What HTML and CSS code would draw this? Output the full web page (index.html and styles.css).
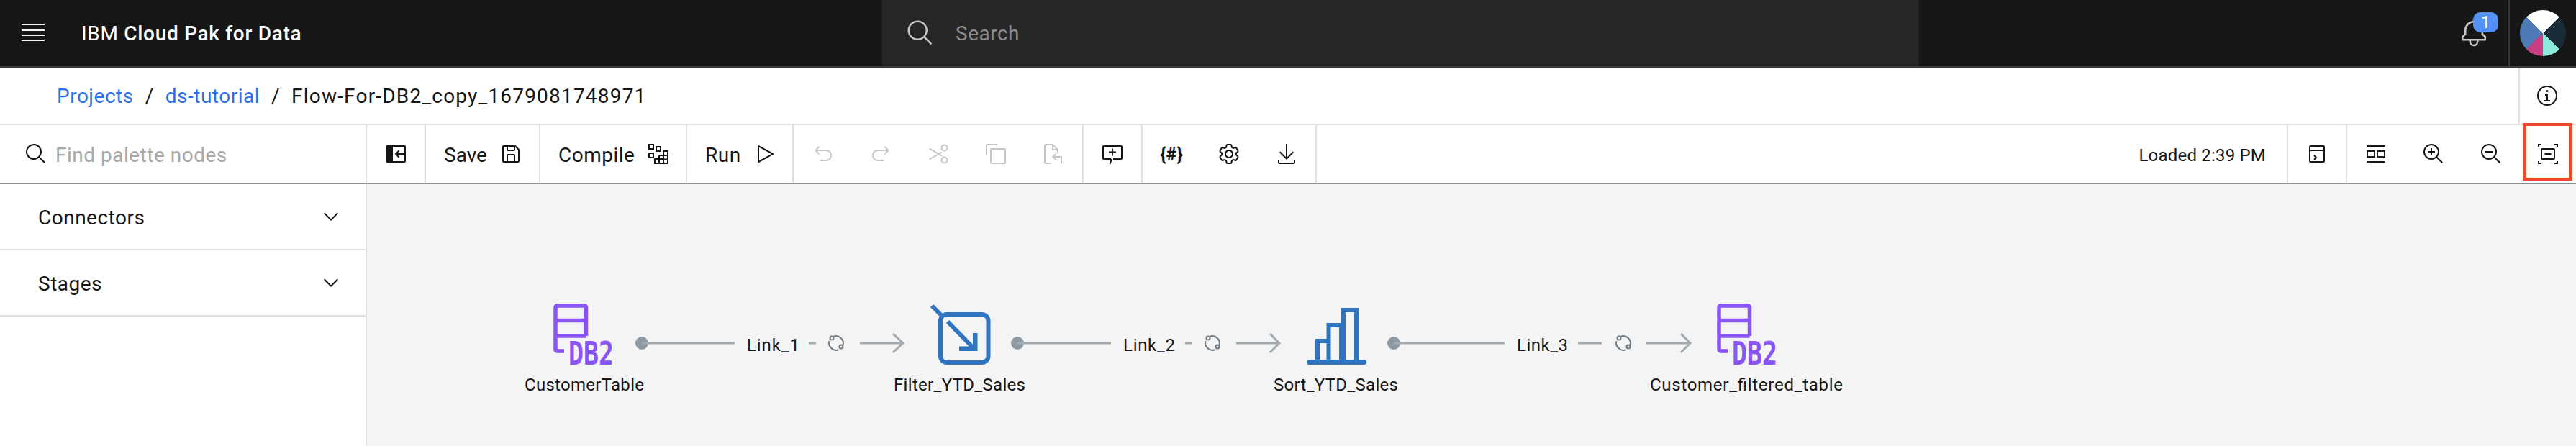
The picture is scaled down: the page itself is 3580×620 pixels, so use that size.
FILE: index.html
```html
<!DOCTYPE html>
<html lang="en">
<head>
    <meta charset="UTF-8">
    <meta name="viewport" content="width=device-width, initial-scale=1.0">
    <title>Flow-For-DB2_copy_1679081748971</title>
    <link rel="stylesheet" href="styles.css">
</head>
<body>
    <header class="topbar">
        <div class="brand">
            <svg class="menu-icon" width="32" height="24" viewBox="0 0 32 24"><path d="M0 0h32v2H0zM0 8h32v2H0zM0 15h32v2H0zM0 22h32v2H0z"/></svg>
            <span class="brand-name">IBM <b>Cloud Pak for Data</b></span>
        </div>
        <div class="global-search">
            <svg width="40" height="40" viewBox="0 0 32 32"><path d="M29,27.5859l-7.5521-7.5521a11.0177,11.0177,0,1,0-1.4141,1.4141L27.5859,29ZM4,13a9,9,0,1,1,9,9A9.01,9.01,0,0,1,4,13Z"/></svg>
            <span>Search</span>
        </div>
        <div class="topbar-right">
            <div class="bell">
                <svg width="42" height="42" viewBox="0 0 32 32"><path d="M28.7071,19.293,26,16.5859V13a10.0136,10.0136,0,0,0-9-9.9492V1H15V3.0508A10.0136,10.0136,0,0,0,6,13v3.5859L3.2929,19.293A1,1,0,0,0,3,20v3a1,1,0,0,0,1,1h7v.7768a5.152,5.152,0,0,0,4.5,5.1987A5.0057,5.0057,0,0,0,21,25V24h7a1,1,0,0,0,1-1V20A1,1,0,0,0,28.7071,19.293ZM19,25a3,3,0,0,1-6,0V24h6Zm8-3H5V20.4141L7.707,17.707A1,1,0,0,0,8,17V13a8,8,0,0,1,16,0v4a1,1,0,0,0,.293.707L27,20.4141Z"/></svg>
                <span class="badge">1</span>
            </div>
            <div class="avatar-cell"><div class="avatar"></div></div>
        </div>
    </header>

    <div class="crumbs-row">
        <nav class="crumbs">
            <a href="#">Projects</a>
            <span>/</span>
            <a href="#">ds-tutorial</a>
            <span>/</span>
            <span class="crumb-current">Flow-For-DB2_copy_1679081748971</span>
        </nav>
        <div class="info-cell">
            <svg width="32" height="32" viewBox="0 0 32 32"><path d="M17 22v-8h-4v2h2v6h-3v2h8v-2h-3zM16 8a1.5 1.5 0 101.5 1.5A1.5 1.5 0 0016 8z"/><path d="M16 30a14 14 0 1114-14A14 14 0 0116 30zm0-26a12 12 0 1012 12A12 12 0 0016 4z"/></svg>
        </div>
    </div>

    <div class="toolbar">
        <div class="palette-search">
            <svg width="32" height="32" viewBox="0 0 32 32"><path d="M29,27.5859l-7.5521-7.5521a11.0177,11.0177,0,1,0-1.4141,1.4141L27.5859,29ZM4,13a9,9,0,1,1,9,9A9.01,9.01,0,0,1,4,13Z"/></svg>
            <span>Find palette nodes</span>
        </div>
        <div class="tool-cell first">
            <div class="tool">
                <svg width="32" height="32" viewBox="0 0 32 32"><path d="M4 4h24a2 2 0 012 2v20a2 2 0 01-2 2H4a2 2 0 01-2-2V6a2 2 0 012-2zm8 2v20h16V6z"/><path d="M20 10.6l1.4 1.4-3 3H28v2h-9.6l3 3-1.4 1.4L14.6 16z"/></svg>
            </div>
        </div>
        <div class="tool-cell labelled save-cell">
            <span>Save</span>
            <svg width="32" height="32" viewBox="0 0 32 32"><path d="M27.71,9.29l-5-5A1,1,0,0,0,22,4H6A2,2,0,0,0,4,6V26a2,2,0,0,0,2,2H26a2,2,0,0,0,2-2V10A1,1,0,0,0,27.71,9.29ZM12,6h8v4H12Zm8,20H12V18h8Zm2,0V18a2,2,0,0,0-2-2H12a2,2,0,0,0-2,2v8H6V6h4v4a2,2,0,0,0,2,2h8a2,2,0,0,0,2-2V6.41l4,4V26Z"/></svg>
        </div>
        <div class="tool-cell labelled compile-cell">
            <span>Compile</span>
            <svg width="32" height="32" viewBox="0 0 32 32" class="line-icon"><rect x="3" y="3" width="6" height="6"/><rect x="13" y="6" width="6" height="6"/><rect x="3" y="15" width="6" height="6"/><path d="M23 12h6v17H11v-6h12zM17 18h12M17 18v11M23 12v17M11 23.500h18"/></svg>
        </div>
        <div class="tool-cell labelled run-cell">
            <span>Run</span>
            <svg width="32" height="32" viewBox="0 0 32 32"><path d="M7,28a1,1,0,0,1-1-1V5a1,1,0,0,1,1.4819-.8763l20,11a1,1,0,0,1,0,1.7525l-20,11A1.0005,1.0005,0,0,1,7,28ZM8,6.6909V25.3092L24.9248,16Z"/></svg>
        </div>
        <div class="tool-cell edit-cell">
            <div class="tool disabled"><svg width="32" height="32" viewBox="0 0 32 32"><path d="M20,10H7.8149l3.5874-3.5859L10,5,4,11,10,17l1.4023-1.4146L7.8179,12H20a6,6,0,0,1,0,12H12v2h8a8,8,0,0,0,0-16Z"/></svg></div>
            <div class="tool disabled"><svg width="32" height="32" viewBox="0 0 32 32"><path d="M12,10H24.1851L20.5977,6.4141,22,5,28,11,22,17l-1.4023-1.4146L24.1821,12H12a6,6,0,0,0,0,12h8v2H12a8,8,0,0,1,0-16Z"/></svg></div>
            <div class="tool disabled"><svg width="32" height="32" viewBox="0 0 32 32" class="line-icon"><circle cx="24.500" cy="7.500" r="4"/><circle cx="24.500" cy="24.500" r="4"/><path d="M3.500 8.500L21 18.600M3.500 23.500L21 13.400"/></svg></div>
            <div class="tool disabled"><svg width="32" height="32" viewBox="0 0 32 32"><path d="M28,10V28H10V10H28m0-2H10a2,2,0,0,0-2,2V28a2,2,0,0,0,2,2H28a2,2,0,0,0,2-2V10a2,2,0,0,0-2-2Z"/><path d="M4,18H2V4A2,2,0,0,1,4,2H18V4H4Z"/></svg></div>
            <div class="tool disabled"><svg width="32" height="32" viewBox="0 0 32 32" class="line-icon"><path d="M13 29H5.500a1.500 1.500 0 01-1.500-1.500V4.500A1.500 1.500 0 015.500 3H15l7 7v5M15 3v7h7M27 29v-9h-11M20 15.500L15.500 20l4.500 4.500"/></svg></div>
        </div>
        <div class="tool-cell comment-cell">
            <div class="tool"><svg width="32" height="32" viewBox="0 0 32 32" class="line-icon"><path d="M15 23l-2.500 7M17 23h11a1 1 0 001-1V6a1 1 0 00-1-1H4a1 1 0 00-1 1v16a1 1 0 001 1h10"/><path d="M16 8.500v10M11 13.500h10"/></svg></div>
        </div>
        <div class="tool-cell misc-cell">
            <div class="tool code-tool">{#}</div>
            <div class="tool"><svg width="32" height="32" viewBox="0 0 32 32"><path d="M27,16.76c0-.25,0-.5,0-.76s0-.51,0-.77l1.92-1.68A2,2,0,0,0,29.3,11L26.94,7a2,2,0,0,0-1.73-1,2,2,0,0,0-.64.1l-2.43.82a11.35,11.35,0,0,0-1.31-.75l-.51-2.52a2,2,0,0,0-2-1.61H13.64a2,2,0,0,0-2,1.61l-.51,2.52a11.48,11.48,0,0,0-1.32.75L7.43,6.06A2,2,0,0,0,6.79,6,2,2,0,0,0,5.06,7L2.7,11a2,2,0,0,0,.41,2.51L5,15.24c0,.25,0,.5,0,.76s0,.51,0,.77L3.11,18.45A2,2,0,0,0,2.7,21L5.06,25a2,2,0,0,0,1.73,1,2,2,0,0,0,.64-.1l2.43-.82a11.35,11.35,0,0,0,1.31.75l.51,2.52a2,2,0,0,0,2,1.61h4.72a2,2,0,0,0,2-1.61l.51-2.52a11.48,11.48,0,0,0,1.32-.75l2.42.82a2,2,0,0,0,.64.1,2,2,0,0,0,1.73-1L29.3,21a2,2,0,0,0-.41-2.51ZM25.21,24l-3.43-1.16a8.86,8.86,0,0,1-2.71,1.57L18.36,28H13.64l-.71-3.55a9.36,9.36,0,0,1-2.7-1.57L6.79,24,4.43,20l2.72-2.4a8.9,8.9,0,0,1,0-3.13L4.43,12,6.79,8l3.43,1.16a8.86,8.86,0,0,1,2.71-1.57L13.64,4h4.72l.71,3.55a9.36,9.36,0,0,1,2.7,1.57L25.21,8,27.57,12l-2.72,2.4a8.9,8.9,0,0,1,0,3.13L27.57,20Z"/><path d="M16,22a6,6,0,1,1,6-6A5.94,5.94,0,0,1,16,22Zm0-10a3.91,3.91,0,0,0-4,4,3.91,3.91,0,0,0,4,4,3.91,3.91,0,0,0,4-4A3.91,3.91,0,0,0,16,12Z"/></svg></div>
            <div class="tool"><svg width="32" height="32" viewBox="0 0 32 32"><path d="M26 24v4H6v-4H4v4a2 2 0 002 2h20a2 2 0 002-2v-4zM26 14l-1.41-1.41L17 20.17V2h-2v18.17l-7.59-7.58L6 14l10 10 10-10z"/></svg></div>
        </div>
        <div class="tool-cell status-cell">Loaded 2:39 PM</div>
        <div class="tool-cell console-cell">
            <div class="tool"><svg width="32" height="32" viewBox="0 0 32 32" class="line-icon"><rect x="6" y="5" width="20" height="22" rx="1"/><path d="M6 11h20M12 18l3 3-3 3"/></svg></div>
        </div>
        <div class="tool-cell view-cell">
            <div class="tool"><svg width="32" height="32" viewBox="0 0 32 32" class="line-icon"><path d="M3 5h26M3 27h26"/><rect x="4" y="12" width="10" height="8"/><rect x="18" y="12" width="10" height="8"/></svg></div>
            <div class="tool"><svg width="32" height="32" viewBox="0 0 32 32"><path d="M18 12h-4V8h-2v4H8v2h4v4h2v-4h4v-2z"/><path d="M21.4479,20A10.856,10.856,0,0,0,24,13,11,11,0,1,0,13,24a10.856,10.856,0,0,0,7-2.5521L27.5859,29,29,27.5859ZM13,22a9,9,0,1,1,9-9A9.01,9.01,0,0,1,13,22Z"/></svg></div>
            <div class="tool"><svg width="32" height="32" viewBox="0 0 32 32"><path d="M8 12h10v2H8z"/><path d="M21.4479,20A10.856,10.856,0,0,0,24,13,11,11,0,1,0,13,24a10.856,10.856,0,0,0,7-2.5521L27.5859,29,29,27.5859ZM13,22a9,9,0,1,1,9-9A9.01,9.01,0,0,1,13,22Z"/></svg></div>
            <div class="tool fit-tool">
                <svg width="32" height="32" viewBox="0 0 32 32" class="line-icon"><path d="M3 6V3h4M25 3h4v3M29 26v3h-4M7 29H3v-3"/><rect x="7" y="9" width="18" height="14" rx="1"/><path d="M11.500 16h9"/></svg>
                <div class="highlight"></div>
            </div>
        </div>
    </div>

    <main class="workspace">
        <aside class="palette">
            <div class="palette-group">
                <span>Connectors</span>
                <svg width="32" height="32" viewBox="0 0 32 32"><path d="M16 22L6 12l1.400-1.400 8.600 8.600 8.600-8.600L26 12z"/></svg>
            </div>
            <div class="palette-group">
                <span>Stages</span>
                <svg width="32" height="32" viewBox="0 0 32 32"><path d="M16 22L6 12l1.400-1.400 8.600 8.600 8.600-8.600L26 12z"/></svg>
            </div>
        </aside>

        <!-- viewBox starts at the canvas corner so coords below are page coords -->
        <svg class="flow" viewBox="510 256 3070 364" width="3070" height="364">
            <defs>
                <g id="db2">
                    <path class="db2-frame" d="M814.500 467V427a2 2 0 00-2-2H774a2 2 0 00-2 2v59a2 2 0 002 2h10M772 445.500h42.500M772 467h42.500"/>
                    <text class="db2-mark" x="790" y="507" textLength="63" lengthAdjust="spacingAndGlyphs">DB2</text>
                </g>
                <g id="sync">
                    <path d="M-3.500 -9.200A10 10 0 0 1 9.500 3M3.500 9.200A10 10 0 0 1 -9.500 -3"/>
                    <circle cx="-6" cy="-7" r="2.500"/>
                    <circle cx="7" cy="5" r="2.500"/>
                </g>
            </defs>

            <use href="#db2"/>
            <text class="node-label" x="812" y="543" textLength="166">CustomerTable</text>

            <g class="node-filter">
                <path d="M1295 425l13 13"/>
                <rect x="1307" y="437" width="66.500" height="67" rx="9"/>
                <path d="M1317 447l36 37"/>
                <path class="fill" d="M1352 463h6.500v25H1333v-6.500h19z"/>
            </g>
            <text class="node-label" x="1333.500" y="543" textLength="183">Filter_YTD_Sales</text>

            <g class="node-sort">
                <path d="M1831 502v-28h15.500M1846.500 502v-50H1867M1864 452v50M1867 502v-71h18v71"/>
                <rect class="fill" x="1816" y="500" width="83" height="7" rx="3.500"/>
            </g>
            <text class="node-label" x="1856.500" y="543" textLength="173">Sort_YTD_Sales</text>

            <use href="#db2" x="1617"/>
            <text class="node-label" x="2427" y="543" textLength="268">Customer_filtered_table</text>

            <!-- link 1 -->
            <g class="link">
                <circle cx="892" cy="477" r="9"/>
                <path d="M892 477H1021M1124 477H1134M1195 477H1255M1241 464l14 13-14 13"/>
            </g>
            <text class="link-label" x="1038" y="488" textLength="73">Link_1</text>
            <use class="sync" href="#sync" x="1162" y="477"/>

            <!-- link 2 -->
            <g class="link">
                <circle cx="1414" cy="477" r="9"/>
                <path d="M1414 477H1544M1647 477H1656M1718 477H1778M1765 464l13 13-13 13"/>
            </g>
            <text class="link-label" x="1561" y="488" textLength="72">Link_2</text>
            <use class="sync" href="#sync" x="1685" y="477"/>

            <!-- link 3 -->
            <g class="link">
                <circle cx="1937" cy="477" r="9"/>
                <path d="M1937 477H2091M2193 477H2226M2288 477H2349M2336 464l13 13-13 13"/>
            </g>
            <text class="link-label" x="2108" y="488" textLength="71">Link_3</text>
            <use class="sync" href="#sync" x="2256" y="477"/>
        </svg>
    </main>
</body>
</html>
```

FILE: styles.css
```css
* { box-sizing: border-box; }
body { margin: 0; font-family: Roboto, "Noto Sans", sans-serif; font-size: 28px; color: #161616; background: #fff; letter-spacing: 0.5px; }
svg { display: block; flex: none; fill: #161616; }

/* top bar */
.topbar { display: flex; height: 94px; background: #161616; border-bottom: 2px solid #393939; color: #fff; }
.brand { display: flex; align-items: center; width: 1226px; padding-left: 30px; }
.menu-icon { fill: #f4f4f4; margin-top: -2px; }
.brand-name { margin-left: 51px; letter-spacing: 0.7px; }
.brand-name b { font-weight: 500; }
.global-search { display: flex; align-items: center; width: 1441px; padding-left: 33px; gap: 29px; background: #262626; color: #8d8d8d; }
.global-search svg { fill: #c6c6c6; }
.topbar-right { flex: 1; display: flex; justify-content: flex-end; }
.bell { position: relative; width: 69px; padding-top: 25px; }
.bell svg { fill: #c6c6c6; }
.badge { position: absolute; top: 17px; left: 20px; width: 35px; height: 28px; border-radius: 10px; background: #5391f9; color: #fff; font-size: 24px; line-height: 28px; text-align: center; letter-spacing: 0; }
.avatar-cell { display: flex; align-items: center; justify-content: center; width: 94px; border-left: 2px solid #393939; }
.avatar { width: 64px; height: 64px; border-radius: 50%; background: conic-gradient(#fff 0 45deg, #1a2b38 45deg 135deg, #8eeadb 135deg 180deg, #c73e83 180deg 225deg, #4f7ab8 225deg 315deg, #fff 315deg); }

/* breadcrumbs */
.crumbs-row { display: flex; height: 80px; border-bottom: 2px solid #e0e0e0; }
.crumbs { flex: 1; display: flex; align-items: center; gap: 16px; padding-left: 79px; }
.crumbs a { color: #2f6fed; text-decoration: none; }
.crumb-current { letter-spacing: 1.2px; }
.info-cell { display: flex; align-items: center; justify-content: center; width: 80px; padding-right: 2px; border-left: 2px solid #e0e0e0; }

/* toolbar */
.toolbar { display: flex; height: 82px; border-bottom: 2px solid #8d8d8d; }
.palette-search { display: flex; align-items: center; gap: 11px; width: 510px; padding-left: 34px; border-right: 2px solid #e0e0e0; color: #a8a8a8; }
.palette-search span { padding-top: 3px; }
.tool-cell { display: flex; align-items: center; border-left: 2px solid #e0e0e0; }
.tool-cell.first { border-left: none; width: 80px; }
.tool { display: flex; align-items: center; justify-content: center; width: 80px; height: 100%; }
.tool.disabled svg { fill: #c6c6c6; stroke: #c6c6c6; stroke-width: 0; }
.tool.disabled .line-icon { fill: none; stroke-width: 2; }
.line-icon { fill: none; stroke: #161616; stroke-width: 2; }
.labelled { padding-left: 25px; gap: 17px; }
.labelled span { padding-top: 3px; }
.save-cell { width: 159px; }
.save-cell span { letter-spacing: 0; }
.compile-cell { width: 204px; }
.run-cell { width: 148px; }
.edit-cell { width: 403px; padding-left: 1px; }
.comment-cell { width: 82px; }
.misc-cell { width: 242px; }
.code-tool { font-size: 25px; font-weight: 700; letter-spacing: 0; }
.status-cell { flex: 1; justify-content: flex-end; padding: 4px 29px 0 0; font-size: 24px; letter-spacing: 0.2px; }
.console-cell { width: 82px; }
.view-cell { width: 320px; }
.fit-tool { position: relative; width: 78px; }
.highlight { position: absolute; top: -3px; left: 4px; width: 69px; height: 80px; border: 4px solid #f2482a; border-left-width: 5px; border-right-width: 5px; }

/* palette and canvas */
.workspace { display: flex; height: 364px; }
.palette { width: 510px; border-right: 2px solid #e0e0e0; }
.palette-group { display: flex; align-items: center; justify-content: space-between; height: 92px; padding: 0 32px 0 53px; border-bottom: 2px solid #e0e0e0; }
.palette-group span { padding-top: 3px; }
.flow { flex: 1; background: #f4f4f4; }

.node-label { font-size: 24px; text-anchor: middle; fill: #161616; letter-spacing: 0; }
.link-label { font-size: 24px; fill: #161616; letter-spacing: 0; }
.link path { fill: none; stroke: #a2abb2; stroke-width: 3; }
.link circle { fill: #8d9aa3; }
.sync { fill: none; stroke: #6f7b84; stroke-width: 2; }
.db2-frame { fill: none; stroke: #8a55f7; stroke-width: 5.5; }
.db2-mark { font-family: "DejaVu Sans Mono", monospace; font-size: 44px; font-weight: 700; fill: #8a55f7; letter-spacing: 0; }
.node-filter, .node-sort { fill: none; stroke: #2e74c0; stroke-width: 6; }
.node-filter .fill, .node-sort .fill { fill: #2e74c0; stroke: none; }
```
